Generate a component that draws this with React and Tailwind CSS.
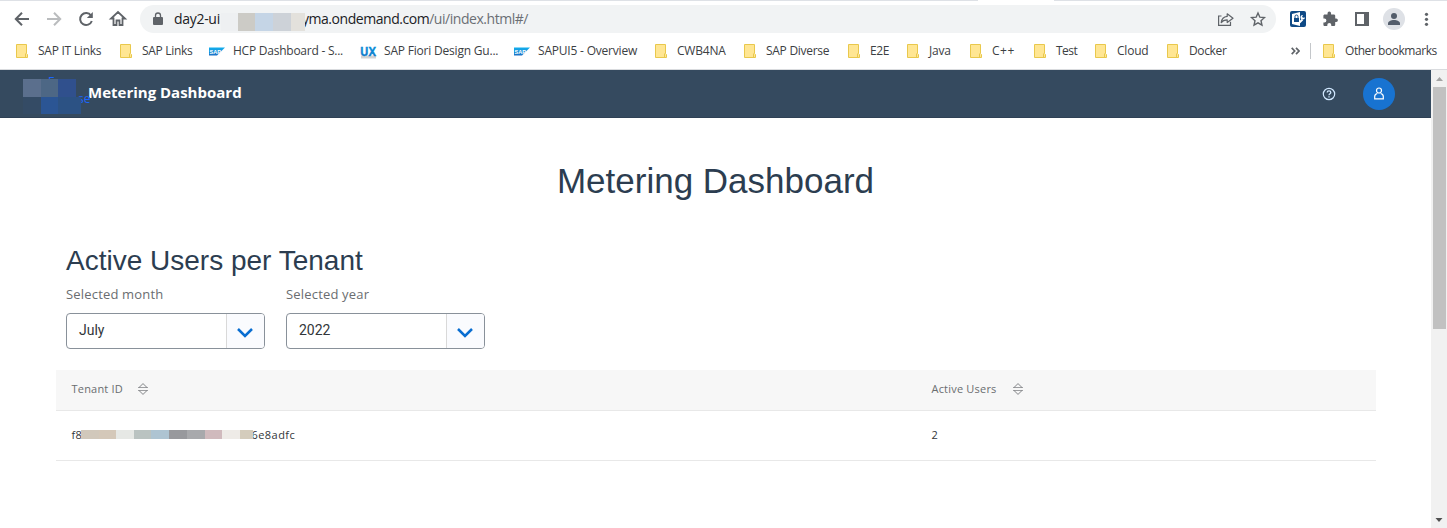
import React from "react";

function Folder() {
  return (
    <svg width="12" height="14" viewBox="0 0 12 14" className="shrink-0">
      <path d="M.5.5h10v9l1 1v3H.5z" fill="#ffe693" stroke="#e9c84c" />
      <path d="M9.5 13.5v-4" stroke="#e9c84c" fill="none" />
    </svg>
  );
}

function SapMark() {
  return (
    <svg width="16" height="9" viewBox="0 0 16 9" className="shrink-0">
      <defs>
        <linearGradient id="sap" x1="0" y1="0" x2="0" y2="1">
          <stop offset="0" stopColor="#12b0ee" />
          <stop offset="1" stopColor="#1c6fc4" />
        </linearGradient>
      </defs>
      <path d="M0 .5h16L8 8.5H0z" fill="url(#sap)" />
      <text x="0.6" y="6.6" fontSize="6.2" fontWeight="700" fontFamily="Liberation Sans, sans-serif" fill="#fff" textLength="11.5" lengthAdjust="spacingAndGlyphs">SAP</text>
    </svg>
  );
}

function UxMark() {
  return (
    <svg width="17" height="14" viewBox="0 0 17 14" overflow="visible" className="shrink-0">
      <defs>
        <linearGradient id="ux" x1="0" y1="0" x2="0" y2="1">
          <stop offset="0" stopColor="#00a5e8" />
          <stop offset="1" stopColor="#1668bd" />
        </linearGradient>
      </defs>
      <rect x="1" y="11.500" width="15" height="3" fill="#d3d3d3" />
      <text x="0" y="12" fontSize="13" fontWeight="700" fontFamily="Open Sans, sans-serif" fill="url(#ux)" stroke="#0b86d3" strokeWidth=".4" textLength="16" lengthAdjust="spacingAndGlyphs">UX</text>
    </svg>
  );
}

function Bookmark({ icon = <Folder />, label, width, gap = "gap-[10px]", tracking = "tracking-[-0.2px]" }) {
  return (
    <div className={`flex shrink-0 items-center whitespace-nowrap ${width} ${gap}`}>
      {icon}
      <span className={tracking}>{label}</span>
    </div>
  );
}

function SortIcon() {
  return (
    <svg width="10" height="12" viewBox="0 0 10 12" fill="none" stroke="#85878a" className="mb-px">
      <path d="M1 4.500 5 .6l4 3.900M1 7.500l4 3.900 4-3.900" strokeWidth="1" />
      <path d="M0 4.500h10M0 7.500h10" strokeWidth=".8" />
    </svg>
  );
}

function Select({ label, value }) {
  return (
    <div className="w-[199px]">
      <div className="h-[26px] text-[13px] leading-[14px] tracking-[0.18px] text-[#6a6d70]">{label}</div>
      <div className="flex h-9 overflow-hidden rounded-[4px] border border-[#89919a] bg-white">
        <div className="flex-1 pl-3 font-['Roboto',sans-serif] text-[14px] leading-[33px] text-[#32363a]">{value}</div>
        <div className="flex w-[38px] items-center justify-center border-l border-[#d9d9d9] bg-[#fafbfe] pr-[2px] pt-1">
          <svg width="16" height="10" viewBox="0 0 16 10" fill="none" stroke="#0a6ed1" strokeWidth="2.500">
            <path d="m1 1 7 7 7-7" />
          </svg>
        </div>
      </div>
    </div>
  );
}

function Toolbar() {
  return (
    <div className="flex h-[28px] items-center text-[#5f6368]">
      <svg width="140" height="28" viewBox="0 0 140 28" fill="none" stroke="#5f6368" strokeWidth="2" className="shrink-0">
        <path d="M29 14H16.500M22 7.800 15.800 14l6.200 6.200" />
        <path d="M47 14h12.500M54 7.800l6.200 6.200-6.200 6.200" stroke="#babcbe" />
        <path d="M91 10.500A6 6 0 1 0 91.800 16" />
        <path d="M92.800 7v6h-6z" fill="#5f6368" stroke="none" />
        <path d="M111 13.500h2.500V20h3v-4.500h3V20h3v-6.500h2.500L118 7z" strokeWidth="1.800" />
      </svg>
      <div className="flex h-[28px] w-[1136px] shrink-0 items-center rounded-full bg-[#f1f3f4]">
        <svg width="10" height="13" viewBox="0 0 10 13" className="ml-[13px] mb-px shrink-0">
          <path d="M1 5h8a1 1 0 0 1 1 1v6a1 1 0 0 1-1 1H1a1 1 0 0 1-1-1V6a1 1 0 0 1 1-1z" fill="#5f6368" />
          <path d="M2.500 5.500v-2a2.500 2.500 0 0 1 5 0v2" fill="none" stroke="#5f6368" strokeWidth="1.300" />
        </svg>
        <div className="relative ml-[11px] flex h-[28px] w-[400px] whitespace-nowrap text-[14px] leading-[28px] text-[#202124]">
          <span className="w-[128px] tracking-[-0.3px]">day2-ui</span>
          <span className="tracking-[-0.46px]">yma.ondemand.com<span className="text-[#6b6f74]">/ui/index.html#/</span></span>
          <div className="absolute left-[47px] top-[8px] flex h-[18px]">
            <div className="w-[17px] bg-[#eef0f2]" />
            <div className="w-[17px] bg-[#cccbc6]" />
            <div className="w-[18px] bg-[#c5d5e6]" />
            <div className="w-[18px] bg-[#cdd2d8]" />
            <div className="w-[14px] bg-[#e3e1dc]" />
          </div>
        </div>
        <svg width="60" height="28" viewBox="0 0 60 28" fill="none" stroke="#5f6368" strokeWidth="1.200" className="ml-auto mr-[8px]">
          <path d="M13.500 11h-2.900v9.400h11.900v-3.600" />
          <path d="M19.200 8.800 25 13.300l-5.800 4.200v-2.700c-2.700 0-4.700.8-6 2.800.4-3.400 2.200-5.700 6-6.200z" strokeLinejoin="round" />
          <path d="m50 8 1.850 4.200 4.550.45-3.400 3.050.95 4.500L50 17.850l-3.950 2.350.95-4.500-3.400-3.050 4.550-.45z" strokeWidth="1.400" />
        </svg>
      </div>
      <svg width="171" height="28" viewBox="1276 5 171 28" className="shrink-0">
        <rect x="1290" y="11" width="16" height="16" rx="2" fill="#0f4a86" />
        <path d="m1292 14 8-2v14l-8-2z" fill="#fff" />
        <rect x="1294" y="18" width="5" height="4" fill="#0f4a86" />
        <path d="M1295 18v-1.500a1.500 1.500 0 0 1 3 0V18" fill="none" stroke="#0f4a86" />
        <path d="m1299.500 22.500 3-3" stroke="#fff" strokeWidth="2" />
        <path d="M1305 17.500a2.300 2.300 0 1 1-2-2.500l-1 1.800 1 1z" fill="#fff" />
        <path d="M1335.200 18.600h-1v-2.800c0-.8-.6-1.400-1.400-1.400h-2.700v-1a1.800 1.800 0 0 0-3.600 0v1h-2.700c-.8 0-1.400.6-1.400 1.400v2.600h1a2 2 0 0 1 0 4h-1v2.300c0 .8.600 1.400 1.400 1.400h2.500v-1a2 2 0 0 1 4 0v1h2.500c.8 0 1.400-.6 1.400-1.400v-2.700h1a1.700 1.700 0 0 0 0-3.400z" transform="translate(1 0)" fill="#5f6368" />
        <path d="M1356 13h12v12h-12z" fill="none" stroke="#5f6368" strokeWidth="2" />
        <path d="M1364 12h5v14h-5z" fill="#5f6368" />
        <circle cx="1394" cy="19" r="11" fill="#dee1e6" />
        <circle cx="1394" cy="16" r="3" fill="#535d6b" />
        <path d="M1388 25v-1.500c0-2.300 3-3.500 6-3.500s6 1.200 6 3.500V25z" fill="#535d6b" />
        <g fill="#5f6368"><circle cx="1426.500" cy="14.300" r="1.600" /><circle cx="1426.500" cy="19.300" r="1.600" /><circle cx="1426.500" cy="24.300" r="1.600" /></g>
      </svg>
    </div>
  );
}

export default function App() {
  return (
    <div className="flex h-[528px] w-[1447px] flex-col overflow-hidden bg-white font-['Open_Sans','Noto_Sans',sans-serif]">
      <div className="flex h-[5px] shrink-0">
        <div className="h-px w-[978px] bg-[#dee1e6]" />
        <div className="ml-[76px] h-px flex-1 bg-[#dee1e6]" />
      </div>
      <Toolbar />
      <div className="flex h-[37px] shrink-0 items-center border-b border-[#d9dbde] pl-4 text-[12px] leading-[16px] text-[#3c4043]">
        <Bookmark label="SAP IT Links" width="w-[104px]" tracking="tracking-[-0.25px]" />
        <Bookmark label="SAP Links" width="w-[89px]" tracking="tracking-[-0.3px]" />
        <Bookmark icon={<SapMark />} label="HCP Dashboard - S..." width="w-[151px]" gap="gap-2" tracking="tracking-[-0.24px]" />
        <Bookmark icon={<UxMark />} label="SAP Fiori Design Gu..." width="w-[154px]" gap="gap-[7px]" />
        <Bookmark icon={<SapMark />} label="SAPUI5 - Overview" width="w-[141px]" gap="gap-2" />
        <Bookmark label="CWB4NA" width="w-[89px]" />
        <Bookmark label="SAP Diverse" width="w-[104px]" tracking="tracking-[-0.28px]" />
        <Bookmark label="E2E" width="w-[59px]" tracking="tracking-[-0.4px]" />
        <Bookmark label="Java" width="w-[63px]" />
        <Bookmark label="C++" width="w-[64px]" tracking="tracking-[0.5px]" />
        <Bookmark label="Test" width="w-[61px]" tracking="tracking-[-0.5px]" />
        <Bookmark label="Cloud" width="w-[72px]" />
        <Bookmark label="Docker" width="w-[124px]" tracking="tracking-[-0.35px]" />
        <svg width="9" height="8" viewBox="0 0 9 8" fill="none" stroke="#5f6368" strokeWidth="1.700" className="shrink-0">
          <path d="m.7.800 3 3.200-3 3.200M5 .800 8 4 5 7.200" />
        </svg>
        <div className="ml-[10px] mr-3 h-4 w-px bg-[#c4c7ca]" />
        <Bookmark label="Other bookmarks" width="w-[124px]" tracking="tracking-[-0.45px]" />
      </div>
      <div className="flex min-h-0 flex-1">
        <div className="w-[1431px]">
          <header className="flex h-12 items-center border-b border-[#2f4155] bg-[#354a5f]">
            <div className="relative h-12 w-[88px] text-[12px] leading-[14px] text-[#1b66ff]">
              <span className="absolute left-[48px] top-[5px]">E</span>
              <span className="absolute left-[78px] top-[22px]">se</span>
              <div className="absolute left-[23px] top-[9px] grid grid-cols-[18px_17px_18px] grid-rows-[18px_17px]">
                <div className="bg-[#5b6f8d]" /><div className="bg-[#4d6785]" /><div className="bg-[#30508d]" />
                <div className="bg-[#344b65]" /><div className="bg-[#2b5594]" /><div className="w-[23px] bg-[#2c5284]" />
              </div>
            </div>
            <div className="pb-[2px] text-[15px] font-bold text-white">Metering Dashboard</div>
            <svg width="14" height="14" viewBox="0 0 14 14" fill="none" stroke="#d1e8ff" className="ml-auto mr-[27px]">
              <circle cx="7" cy="7" r="5.700" strokeWidth="1.200" />
              <path d="M5.200 5.600c0-2.400 3.600-2.300 3.600-.1C8.800 6.900 7 6.800 7 8.300M7 9.200v1.300" strokeWidth="1.300" />
            </svg>
            <div className="mr-9 flex h-8 w-8 items-center justify-center rounded-full bg-[#1873d1]">
              <svg width="12" height="13" viewBox="0 0 12 13" fill="none" stroke="#fff" strokeWidth="1.200">
                <circle cx="6" cy="3.500" r="2.500" />
                <path d="M4.300 6.500C2.500 7 1.700 8.300 1.700 9.500v2.300h8.600V9.500c0-1.200-.8-2.500-2.600-3" />
              </svg>
            </div>
          </header>
          <h1 className="mt-[42px] text-center font-['Liberation_Sans',sans-serif] text-[35px] leading-[42px] text-[#2c3d50]">Metering Dashboard</h1>
          <section className="px-[56px] pt-[41px]">
            <h2 className="pl-[10px] font-['Liberation_Sans',sans-serif] text-[28px] leading-[36px] text-[#2c3d50]">Active Users per Tenant</h2>
            <div className="flex gap-[21px] pl-[10px] pt-2">
              <Select label="Selected month" value="July" />
              <Select label="Selected year" value="2022" />
            </div>
            <div className="mt-[21px] w-[1320px] text-[11px] tracking-[0.2px]">
              <div className="flex h-[41px] items-center border-b border-[#e8e8e8] bg-[#f7f7f7] pb-[2px] pl-[15.5px] text-[#6a6d70]">
                <div className="flex w-[860px] items-center"><span className="w-[66.5px]">Tenant ID</span><SortIcon /></div>
                <div className="flex items-center"><span className="w-[81.5px]">Active Users</span><SortIcon /></div>
              </div>
              <div className="flex h-[50px] items-center border-b border-[#e8e8e8] pl-[15.5px] text-[#32363a]">
                <div className="relative flex w-[860px]">
                  <span className="w-[180px]">f8</span><span className="tracking-[0.45px]">6e8adfc</span>
                  <div className="absolute left-[9.5px] top-[3px] flex h-[9px]">
                    <div className="w-[18px] bg-[#d1c8bb]" /><div className="w-[17px] bg-[#d4c8b9]" /><div className="w-[18px] bg-[#e6e8e5]" />
                    <div className="w-[17px] bg-[#bac3c1]" /><div className="w-[18px] bg-[#aec4d2]" /><div className="w-[18px] bg-[#98999d]" />
                    <div className="w-[18px] bg-[#a8a9ac]" /><div className="w-[17px] bg-[#d0babd]" /><div className="w-[18px] bg-[#eeebe7]" /><div className="w-[13px] bg-[#d4ccbc]" />
                  </div>
                </div>
                <span>2</span>
              </div>
            </div>
          </section>
        </div>
        <div className="flex w-4 flex-col items-center bg-[#f1f1f1]">
          <svg width="16" height="17" viewBox="0 0 16 17"><path d="M5 11 8.500 7 12 11z" fill="#a3a3a3" /></svg>
          <div className="ml-px h-[242px] w-[13px] bg-[#c1c1c1]" />
          <svg width="16" height="17" viewBox="0 0 16 17" className="mt-auto"><path d="M4.500 7h7L8 11z" fill="#505050" /></svg>
        </div>
      </div>
    </div>
  );
}
